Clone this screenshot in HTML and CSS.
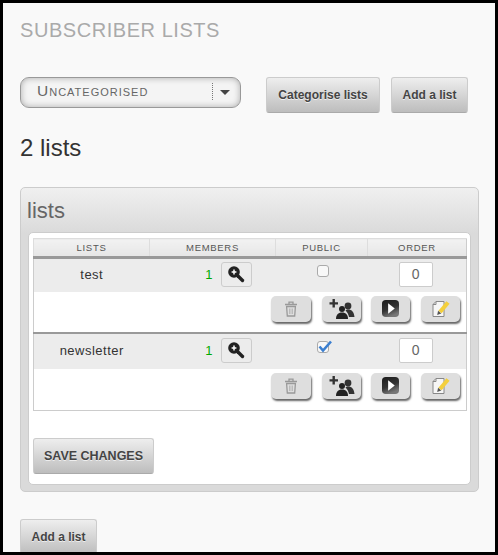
FILE: index.html
```html
<!DOCTYPE html>
<html>

<head>
    <meta name="viewport" content="width=device-width, initial-scale=1.0">
    <link rel="stylesheet" href="styles.css">
    <title>Subscriber lists</title>
</head>

<body>
    <svg class="defs" width="0" height="0">
        <defs>
            <linearGradient id="play-bg" x1="0" y1="0" x2="0.4" y2="1">
                <stop offset="0" stop-color="#1c1c1c"/>
                <stop offset="0.6" stop-color="#333"/>
                <stop offset="1" stop-color="#777"/>
            </linearGradient>
        </defs>
        <symbol id="i-zoom" viewBox="0 0 18 18">
            <circle cx="7" cy="7" r="5.800" fill="#222"/>
            <path d="M11 11l4.500 4.500" stroke="#222" stroke-width="3.400" stroke-linecap="round"/>
            <path d="M4.600 7h4.800M7 4.600v4.800" stroke="#fff" stroke-width="1.500"/>
        </symbol>
        <symbol id="i-trash" viewBox="0 0 14 16">
            <path d="M1 3.500h12M5 3V1.200h4V3" fill="none" stroke="#999" stroke-width="1.300"/>
            <path d="M2.600 5.500h8.800l-.7 9.500H3.300z" fill="none" stroke="#999" stroke-width="1.300"/>
            <path d="M5.500 7.500v5.500M7 7.500v5.500M8.500 7.500v5.500" stroke="#bbb"/>
        </symbol>
        <symbol id="i-users" viewBox="0 0 26 20">
            <path d="M3.500 0h2.400v3.200H9v2.400H5.900v3H3.500v-3H.5V3.200h3z" fill="#333"/>
            <circle cx="19" cy="7" r="3.400" fill="#333"/>
            <circle cx="13" cy="10" r="3" fill="#222"/>
            <path d="M7 20c0-4 2-6.500 6-6.500s6 2.500 6 6.500z" fill="#222"/>
            <path d="M16.500 11.500c1-.8 1.500-1 2.500-1 4 0 6 2.500 6.500 7.500h-5.500c-.5-2.500-1.500-4.500-3.500-6.500z" fill="#333"/>
        </symbol>
        <symbol id="i-play" viewBox="0 0 18 18">
            <rect width="18" height="18" rx="4" fill="url(#play-bg)"/>
            <path d="M6.500 3.500l7 5.500-7 5.500z" fill="#fff"/>
        </symbol>
        <symbol id="i-edit" viewBox="0 0 18 18">
            <path d="M1 4.500l3-3h8v15H1z" fill="#f6f6f6" stroke="#888"/>
            <path d="M4 1.500v3H1" fill="none" stroke="#888"/>
            <path d="M16 2.500L8 12" stroke="#f3cf3c" stroke-width="4.200"/>
            <path d="M5.200 15l.9-4.200 3.200 2.600z" fill="#555"/>
        </symbol>
    </svg>

    <div class="frame">
        <h1 class="title">Subscriber lists</h1>

        <div class="toolbar">
            <div class="dropdown">
                <span class="dropdown-text">Uncategorised</span>
                <span class="dropdown-arrow"></span>
            </div>
            <a class="btn btn-cat">Categorise lists</a>
            <a class="btn btn-add">Add a list</a>
        </div>

        <h2 class="count">2 lists</h2>

        <div class="panel">
            <h3 class="panel-title">lists</h3>
            <div class="panel-body">
                <table class="lists">
                    <thead>
                        <tr>
                            <th class="col-name">Lists</th>
                            <th class="col-members">Members</th>
                            <th class="col-public">Public</th>
                            <th class="col-order">Order</th>
                        </tr>
                    </thead>
                    <tbody>
                        <tr class="row-main">
                            <td class="name">test</td>
                            <td>
                                <div class="members">
                                    <span class="num">1</span>
                                    <a class="zoom"><svg width="18" height="18"><use href="#i-zoom"/></svg></a>
                                </div>
                            </td>
                            <td class="pub"><span class="check"></span></td>
                            <td class="ord"><span class="order-input">0</span></td>
                        </tr>
                        <tr class="row-actions">
                            <td colspan="4">
                                <div class="actions">
                                    <a class="act act-trash"><svg width="14" height="16"><use href="#i-trash"/></svg></a>
                                    <a class="act act-users"><svg width="26" height="20"><use href="#i-users"/></svg></a>
                                    <a class="act act-play"><svg width="17" height="17"><use href="#i-play"/></svg></a>
                                    <a class="act act-edit"><svg width="18" height="18"><use href="#i-edit"/></svg></a>
                                </div>
                            </td>
                        </tr>
                        <tr class="row-main row-next">
                            <td class="name">newsletter</td>
                            <td>
                                <div class="members">
                                    <span class="num">1</span>
                                    <a class="zoom"><svg width="18" height="18"><use href="#i-zoom"/></svg></a>
                                </div>
                            </td>
                            <td class="pub">
                                <span class="check">
                                    <svg class="tick" width="15" height="13" viewBox="0 0 15 13"><path d="M1.500 6.500l3.500 4L13 1.500" fill="none" stroke="#3b7fd0" stroke-width="2.600"/></svg>
                                </span>
                            </td>
                            <td class="ord"><span class="order-input">0</span></td>
                        </tr>
                        <tr class="row-actions row-last">
                            <td colspan="4">
                                <div class="actions">
                                    <a class="act act-trash"><svg width="14" height="16"><use href="#i-trash"/></svg></a>
                                    <a class="act act-users"><svg width="26" height="20"><use href="#i-users"/></svg></a>
                                    <a class="act act-play"><svg width="17" height="17"><use href="#i-play"/></svg></a>
                                    <a class="act act-edit"><svg width="18" height="18"><use href="#i-edit"/></svg></a>
                                </div>
                            </td>
                        </tr>
                    </tbody>
                </table>

                <a class="btn btn-save">Save changes</a>
            </div>
        </div>

        <a class="btn btn-add btn-bottom">Add a list</a>
    </div>
</body>

</html>
```

FILE: styles.css
```css
html,
body {
    margin: 0;
    padding: 0;
}

body {
    font-family: "Liberation Sans", Arial, sans-serif;
    color: #333;
}

.defs {
    position: absolute;
}

.frame {
    box-sizing: border-box;
    height: 555px;
    overflow: hidden;
    border: 3px solid #000;
    background-color: #f9f9f9;
    padding: 17px 17px 0 17px;
}

.title {
    margin: 0;
    font-size: 20px;
    line-height: 20px;
    font-weight: normal;
    letter-spacing: 0.55px;
    text-transform: uppercase;
    color: #aaa;
}

.toolbar {
    display: flex;
    align-items: flex-start;
    margin-top: 37px;
}

.dropdown {
    box-sizing: border-box;
    width: 221px;
    height: 31px;
    border: 1px solid #999;
    border-radius: 9px;
    background-color: #f4f4f4;
    box-shadow: inset 0 0 6px #aaa;
    display: flex;
    align-items: center;
    position: relative;
}

.dropdown-text {
    margin-left: 16px;
    margin-top: -3px;
    font-size: 15.500px;
    font-variant: small-caps;
    letter-spacing: 1px;
    color: #666;
}

.dropdown-arrow {
    position: absolute;
    left: 191px;
    top: 5px;
    height: 17px;
    padding-left: 7px;
    border-left: 1px dotted #777;
}

.dropdown-arrow::after {
    content: "";
    display: block;
    margin-top: 7px;
    border-left: 5px solid transparent;
    border-right: 5px solid transparent;
    border-top: 5px solid #444;
}

.btn {
    box-sizing: border-box;
    display: block;
    height: 36px;
    line-height: 34px;
    border: 1px solid #ccc;
    border-bottom-color: #aaa;
    border-radius: 3px;
    background: linear-gradient(#eeeeee, #bdbdbd);
    font-size: 12px;
    font-weight: bold;
    text-align: center;
    color: #444;
    text-shadow: 0 1px 0 #eee;
}

.btn-cat {
    width: 114px;
    margin-left: 25px;
}

.btn-add {
    width: 77px;
    margin-left: 11px;
}

.count {
    margin: 21px 0 0 0;
    font-size: 24px;
    line-height: 28px;
    font-weight: normal;
    color: #333;
}

.panel {
    box-sizing: border-box;
    width: 459px;
    height: 305px;
    margin-top: 25px;
    border: 1px solid #ccc;
    border-radius: 5px;
    background: linear-gradient(#f0f0f0, #dadada 45px);
    padding: 0 7px 6px 7px;
}

.panel-title {
    margin: 0 0 0 -1px;
    height: 44px;
    font-size: 22px;
    line-height: 46px;
    font-weight: normal;
    color: #666;
}

.panel-body {
    box-sizing: border-box;
    height: 253px;
    background-color: #fff;
    border: 1px solid #ccc;
    border-radius: 5px;
    padding: 5px 4px 0 4px;
}

.lists {
    width: 434px;
    table-layout: fixed;
    border-collapse: collapse;
    border: 1px solid #ccc;
}

.lists th {
    height: 17px;
    padding: 0;
    border-top: 1px solid #ddd;
    border-left: 1px solid #ddd;
    border-bottom: 3px solid #999;
    background: linear-gradient(#f2f2f2, #e6e6e6);
    font-size: 9.500px;
    font-weight: normal;
    letter-spacing: 0.7px;
    text-transform: uppercase;
    color: #555;
}

.lists td {
    padding: 0;
}

.col-name {
    width: 115px;
}

.col-members {
    width: 125px;
}

.col-public {
    width: 91px;
}

.row-main td {
    box-sizing: border-box;
    height: 34px;
    padding-bottom: 2px;
    background-color: #ececec;
}

.row-next td {
    height: 36px;
    border-top: 2px solid #999;
}

.name {
    text-align: center;
    font-size: 13px;
    letter-spacing: 0.5px;
    color: #333;
}

.members {
    display: flex;
    align-items: center;
    justify-content: flex-end;
    padding-right: 24px;
    gap: 8px;
}

.num {
    font-size: 13px;
    color: #0a0;
}

.zoom {
    box-sizing: border-box;
    width: 31px;
    height: 25px;
    border: 1px solid #ccc;
    border-radius: 3px;
    display: flex;
    align-items: center;
    justify-content: center;
}

.pub {
    text-align: center;
}

.check {
    box-sizing: border-box;
    display: inline-block;
    position: relative;
    width: 12px;
    height: 12px;
    margin-left: 2px;
    border: 1px solid #aaa;
    border-radius: 3px;
    background-color: #f8f8f8;
    vertical-align: 3px;
}

.tick {
    position: absolute;
    left: 0;
    top: -2px;
}

.ord {
    text-align: center;
}

.order-input {
    box-sizing: border-box;
    display: inline-block;
    width: 34px;
    height: 25px;
    margin-right: 2px;
    line-height: 23px;
    border: 1px solid #ccc;
    border-radius: 2px;
    background-color: #fff;
    font-size: 14px;
    color: #666;
    vertical-align: middle;
}

.row-actions td {
    height: 40px;
    vertical-align: top;
    background-color: #fff;
}

.row-last td {
    height: 41px;
}

.actions {
    display: flex;
    justify-content: flex-end;
    gap: 11px;
    padding: 4px 6px 0 0;
}

.act {
    box-sizing: border-box;
    width: 39px;
    height: 26px;
    border-radius: 5px;
    background-color: #dedede;
    box-shadow: 1px 2px 2px #666;
    display: flex;
    align-items: center;
    justify-content: center;
}

.act-trash {
    width: 40px;
}

.act-play {
    margin-left: -1px;
}

.btn-save {
    width: 121px;
    margin-top: 27px;
    font-size: 12.500px;
    text-transform: uppercase;
}

.btn-bottom {
    margin: 27px 0 0 0;
}
```
